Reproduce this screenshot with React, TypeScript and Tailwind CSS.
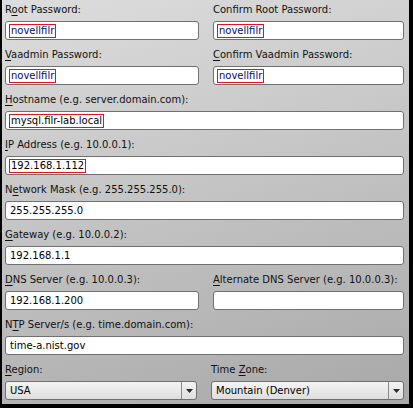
type Label = { pre: string; mk: string; post: string };

function Caption({ pre, mk, post }: Label) {
  return (
    <div className="h-[14px] leading-[14px] text-[10px] text-[#111] whitespace-nowrap">
      {pre}
      {mk && <u className="underline-offset-[2px]">{mk}</u>}
      {post}
    </div>
  );
}

function TextBox({ value, marked, pass }: { value: string; marked?: boolean; pass?: boolean }) {
  return (
    <div className="mt-[4px] h-[19px] bg-white border border-[#707070] rounded-[3px] flex items-center pl-[3px] text-[10px] whitespace-nowrap">
      {marked ? (
        <span
          className={`border border-[#e0141e] h-[14px] leading-[12px] px-[1px] ${
            pass ? "text-[#0a0a6a]" : "text-black"
          }`}
        >
          {value}
        </span>
      ) : (
        <span className="pl-[1px] text-black">{value}</span>
      )}
    </div>
  );
}

function Field({
  label,
  value,
  marked,
  pass,
}: {
  label: Label;
  value: string;
  marked?: boolean;
  pass?: boolean;
}) {
  return (
    <div className="flex flex-col">
      <Caption {...label} />
      <TextBox value={value} marked={marked} pass={pass} />
    </div>
  );
}

function Select({ label, value }: { label: Label; value: string }) {
  return (
    <div className="flex flex-col">
      <Caption {...label} />
      <div className="mt-[4px] h-[19px] border border-[#707070] rounded-[3px] bg-linear-to-b from-[#f4f4f4] to-[#dedede] flex text-[10px] text-black">
        <div className="flex-1 pl-[4px] flex items-center">{value}</div>
        <div className="w-[15px] border-l border-[#8a8a8a] flex items-center justify-center">
          <svg width="7" height="4" viewBox="0 0 7 4">
            <path d="M0 0h7L3.5 4z" fill="#2a2a2a" />
          </svg>
        </div>
      </div>
    </div>
  );
}

const L = (pre: string, mk: string, post: string): Label => ({ pre, mk, post });

export default function App() {
  return (
    <div
      className="w-[413px] h-[408px] border-l-[2px] border-r-[4px] border-b-[4px] border-black bg-linear-[165deg] from-[#dddddd] to-[#a8a8a8] pt-[3px] pl-[3px] pr-[5px] flex flex-col gap-[8px]"
      style={{ fontFamily: '"DejaVu Sans", Verdana, sans-serif' }}
    >
      <div className="grid grid-cols-[194px_191px] gap-x-[14px]">
        <Field label={L("R", "o", "ot Password:")} value="novellfilr" marked pass />
        <Field label={L("Confirm Root Password:", "", "")} value="novellfilr" marked pass />
      </div>
      <div className="grid grid-cols-[194px_191px] gap-x-[14px]">
        <Field label={L("", "V", "aadmin Password:")} value="novellfilr" marked pass />
        <Field label={L("", "C", "onfirm Vaadmin Password:")} value="novellfilr" marked pass />
      </div>
      <Field label={L("", "H", "ostname (e.g. server.domain.com):")} value="mysql.filr-lab.local" marked />
      <Field label={L("", "I", "P Address (e.g. 10.0.0.1):")} value="192.168.1.112" marked />
      <Field label={L("N", "e", "twork Mask (e.g. 255.255.255.0):")} value="255.255.255.0" />
      <Field label={L("", "G", "ateway (e.g. 10.0.0.2):")} value="192.168.1.1" />
      <div className="grid grid-cols-[194px_191px] gap-x-[14px]">
        <Field label={L("", "D", "NS Server (e.g. 10.0.0.3):")} value="192.168.1.200" />
        <Field label={L("", "A", "lternate DNS Server (e.g. 10.0.0.3):")} value="" />
      </div>
      <Field label={L("N", "T", "P Server/s (e.g. time.domain.com):")} value="time-a.nist.gov" />
      <div className="grid grid-cols-[192px_193px] gap-x-[14px]">
        <Select label={L("", "R", "egion:")} value="USA" />
        <Select label={L("Time ", "Z", "one:")} value="Mountain (Denver)" />
      </div>
    </div>
  );
}
